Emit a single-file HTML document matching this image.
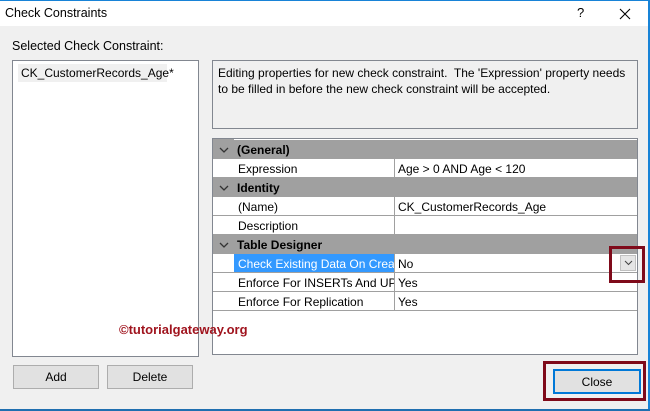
<!DOCTYPE html>
<html><head><style>
*{box-sizing:border-box;margin:0;padding:0}
body{width:650px;height:411px;background:#f0f0f0;font-family:"Segoe UI","Liberation Sans",sans-serif;font-size:12px;color:#000;position:relative;overflow:hidden}
.abs{position:absolute}
.title{left:0;top:0;width:650px;height:26px;background:#fff;border-top:1px solid #1883d7}
.row{position:absolute;left:0;width:424px;height:19px}
.cat{background:#a0a0a0;font-weight:bold}
.cat span{position:absolute;left:24px;top:3px}
.chev{position:absolute;left:6px;top:5px;width:10px;height:10px}
.p{background:#fff;border-bottom:1px solid #a0a0a0}
.n{position:absolute;left:21px;top:0;width:161px;height:18px;padding:3px 4px 0;white-space:nowrap;overflow:hidden;border-right:1px solid #a0a0a0}
.v{position:absolute;left:182px;top:0;padding:3px 3px 0}
.btn{position:absolute;background:#e1e1e1;border:1px solid #adadad;text-align:center;line-height:22px}
</style></head><body>
<div class="abs title"><div class="abs" style="left:5px;top:5px;font-size:12.5px">Check Constraints</div>
<div class="abs" style="left:577px;top:4px;font-size:13px">?</div>
<svg class="abs" style="left:619px;top:7px" width="12" height="12"><path d="M1 1L11 11M11 1L1 11" stroke="#000" stroke-width="1.1"/></svg></div>
<div class="abs" style="right:0;top:0;width:2px;height:411px;background:#1883d7"></div>
<div class="abs" style="left:0;bottom:0;width:650px;height:2px;background:#1f6fb0"></div>
<div class="abs" style="left:12px;top:39px;font-size:12.5px">Selected Check Constraint:</div>
<div class="abs" style="left:12px;top:60px;width:187px;height:297px;background:#fff;border:1px solid #828790">
<div class="abs" style="left:5px;top:3px;width:149px;height:18px;background:#f0f0f0;padding:2px 3px">CK_CustomerRecords_Age*</div></div>
<div class="abs" style="left:212px;top:60px;width:426px;height:69px;border:1px solid #828790;padding:4px 5px;line-height:16px">Editing properties for new check constraint.&nbsp; The 'Expression' property needs to be filled in before the new check constraint will be accepted.</div>
<div class="abs" style="left:212px;top:138px;width:426px;height:217px;background:#fff;border:1px solid #828790">
<div class="abs" style="left:0;top:0;width:21px;height:171px;background:#a0a0a0"></div>
<div class="row cat" style="top:1px"><svg class="chev" viewBox="0 0 10 10"><path d="M1 3L5 7L9 3" fill="none" stroke="#333" stroke-width="1.3"/></svg><span>(General)</span></div>
<div class="row p" style="top:20px"><div class="n">Expression</div><div class="v">Age &gt; 0 AND Age &lt; 120</div></div>
<div class="row cat" style="top:39px"><svg class="chev" viewBox="0 0 10 10"><path d="M1 3L5 7L9 3" fill="none" stroke="#333" stroke-width="1.3"/></svg><span>Identity</span></div>
<div class="row p" style="top:58px"><div class="n">(Name)</div><div class="v">CK_CustomerRecords_Age</div></div>
<div class="row p" style="top:77px"><div class="n">Description</div><div class="v"></div></div>
<div class="row cat" style="top:96px"><svg class="chev" viewBox="0 0 10 10"><path d="M1 3L5 7L9 3" fill="none" stroke="#333" stroke-width="1.3"/></svg><span>Table Designer</span></div>
<div class="row p" style="top:115px"><div class="n" style="background:#3399ff;color:#fff">Check Existing Data On Creation</div><div class="v">No</div>
<div class="abs" style="left:407px;top:1px;width:16px;height:16px;background:#e5e5e5;border:1px solid #c0c0c0"><svg class="abs" style="left:3px;top:4px" width="9" height="6"><path d="M1 1L4.5 4.5L8 1" fill="none" stroke="#444"/></svg></div></div>
<div class="row p" style="top:134px"><div class="n">Enforce For INSERTs And UPDATEs</div><div class="v">Yes</div></div>
<div class="row p" style="top:153px"><div class="n">Enforce For Replication</div><div class="v">Yes</div></div>
</div>
<div class="abs" style="left:609px;top:246px;width:36px;height:37px;border:3px solid #7f0a1a"></div>
<div class="abs" style="left:119px;top:322px;color:#a0141e;font-weight:bold;font-size:13px;font-family:'Liberation Sans',sans-serif">©tutorialgateway.org</div>
<div class="btn" style="left:13px;top:365px;width:86px;height:24px">Add</div>
<div class="btn" style="left:107px;top:365px;width:86px;height:24px">Delete</div>
<div class="abs" style="left:543px;top:361px;width:103px;height:40px;border:3px solid #7f0a1a"></div>
<div class="btn" style="left:553px;top:369px;width:88px;height:25px;border:2px solid #0078d7">Close</div>
</body></html>
